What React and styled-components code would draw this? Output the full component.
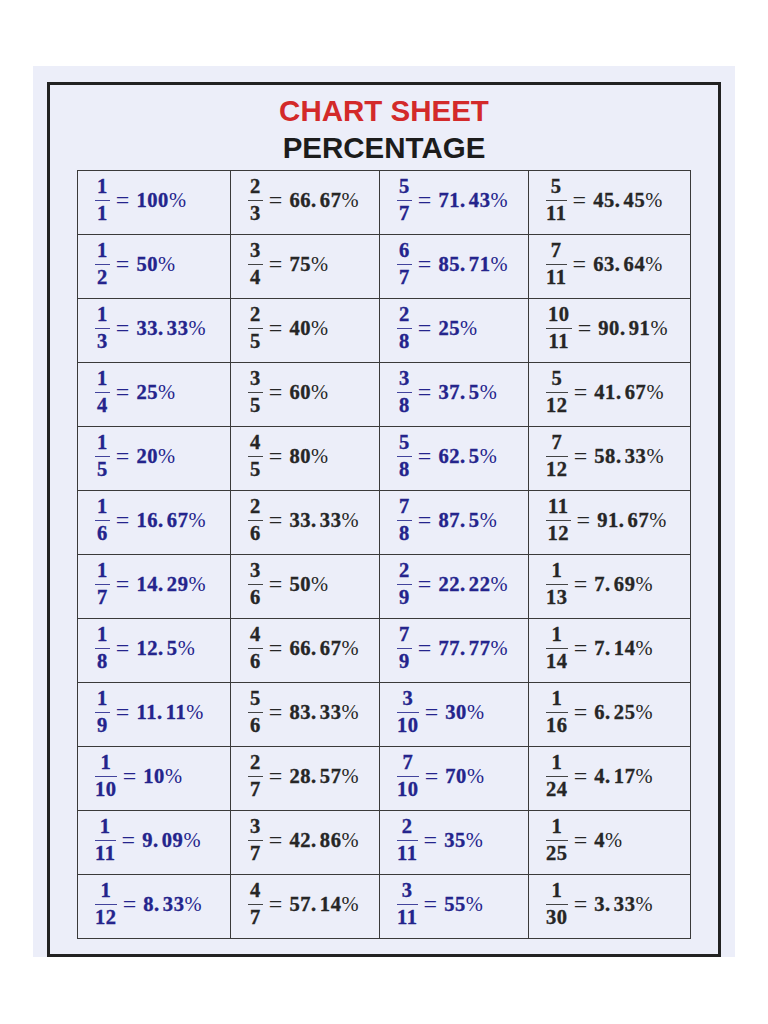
import React from "react";
import styled, { createGlobalStyle } from "styled-components";

const Global = createGlobalStyle`
  html, body { margin: 0; padding: 0; background: #ffffff; }
  body { font-family: "Liberation Sans", Arial, sans-serif; }
`;

const Page = styled.div`
  width: 768px;
  height: 1024px;
  padding-top: 66px;
  padding-left: 33px;
  box-sizing: border-box;
`;

const Paper = styled.div`
  width: 702px;
  height: 891px;
  background: #eceef9;
  padding: 16px 14px 0 14px;
  box-sizing: border-box;
`;

const Frame = styled.div`
  width: 674px;
  height: 875px;
  border: 3px solid #222222;
  box-sizing: border-box;
  padding-top: 7px;
  display: flex;
  flex-direction: column;
  align-items: center;
`;

const Title = styled.div`
  font-family: "Liberation Sans", Arial, sans-serif;
  font-weight: 700;
  font-size: 29.5px;
  line-height: 37px;
  text-align: center;
  color: ${(p) => (p.$red ? "#d32a2a" : "#1c1c1c")};
`;

const Table = styled.div`
  margin-top: 4px;
  display: grid;
  grid-template-columns: 152px 148px 148px 161px;
  grid-auto-rows: 63px;
  gap: 1px;
  padding: 1px;
  background: #3a3a3a;
`;

const Cell = styled.div`
  background: #eceef9;
  display: flex;
  align-items: center;
  padding: 0 0 6px 17px;
  color: ${(p) => (p.$blue ? "#24248c" : "#262626")};
  font-family: "Liberation Serif", "Times New Roman", serif;
  font-size: 20.5px;
`;

const Frac = styled.div`
  display: inline-flex;
  flex-direction: column;
  align-items: stretch;
  text-align: center;
  font-weight: 700;
  letter-spacing: 0.6px;
  -webkit-text-stroke: 0.35px currentColor;
  margin-right: 6px;
`;

const Numer = styled.span`
  display: block;
  line-height: 20px;
  padding: 0 2px 4px 2px;
`;

const Bar = styled.span`
  display: block;
  height: 1.5px;
  background: currentColor;
  opacity: 0.85;
`;

const Denom = styled.span`
  display: block;
  line-height: 20px;
  padding-top: 2px;
`;

const Eq = styled.span`
  font-weight: 400;
  font-size: 24px;
  line-height: 20px;
  margin-right: 7px;
`;

const Value = styled.span`
  font-weight: 700;
  line-height: 20px;
  letter-spacing: 0.6px;
  -webkit-text-stroke: 0.35px currentColor;
`;

const Dec = styled.span`
  margin-left: 3px;
`;

const Pct = styled.span`
  font-weight: 400;
  letter-spacing: 0;
  -webkit-text-stroke: 0;
`;

const rows = [
  ["1/1=100", "2/3=66.67", "5/7=71.43", "5/11=45.45"],
  ["1/2=50", "3/4=75", "6/7=85.71", "7/11=63.64"],
  ["1/3=33.33", "2/5=40", "2/8=25", "10/11=90.91"],
  ["1/4=25", "3/5=60", "3/8=37.5", "5/12=41.67"],
  ["1/5=20", "4/5=80", "5/8=62.5", "7/12=58.33"],
  ["1/6=16.67", "2/6=33.33", "7/8=87.5", "11/12=91.67"],
  ["1/7=14.29", "3/6=50", "2/9=22.22", "1/13=7.69"],
  ["1/8=12.5", "4/6=66.67", "7/9=77.77", "1/14=7.14"],
  ["1/9=11.11", "5/6=83.33", "3/10=30", "1/16=6.25"],
  ["1/10=10", "2/7=28.57", "7/10=70", "1/24=4.17"],
  ["1/11=9.09", "3/7=42.86", "2/11=35", "1/25=4"],
  ["1/12=8.33", "4/7=57.14", "3/11=55", "1/30=3.33"],
];

function Entry({ spec, blue }) {
  const [frac, val] = spec.split("=");
  const [n, d] = frac.split("/");
  const [intPart, decPart] = val.split(".");
  return (
    <Cell $blue={blue}>
      <Frac>
        <Numer>{n}</Numer>
        <Bar />
        <Denom>{d}</Denom>
      </Frac>
      <Eq>=</Eq>
      <Value>
        {decPart ? (
          <>
            {intPart}.<Dec>{decPart}</Dec>
          </>
        ) : (
          intPart
        )}
        <Pct>%</Pct>
      </Value>
    </Cell>
  );
}

export default function App() {
  return (
    <>
      <Global />
      <Page>
        <Paper>
          <Frame>
            <Title $red>CHART SHEET</Title>
            <Title>PERCENTAGE</Title>
            <Table>
              {rows.map((row, ri) =>
                row.map((spec, ci) => (
                  <Entry key={`${ri}-${ci}`} spec={spec} blue={ci % 2 === 0} />
                ))
              )}
            </Table>
          </Frame>
        </Paper>
      </Page>
    </>
  );
}
